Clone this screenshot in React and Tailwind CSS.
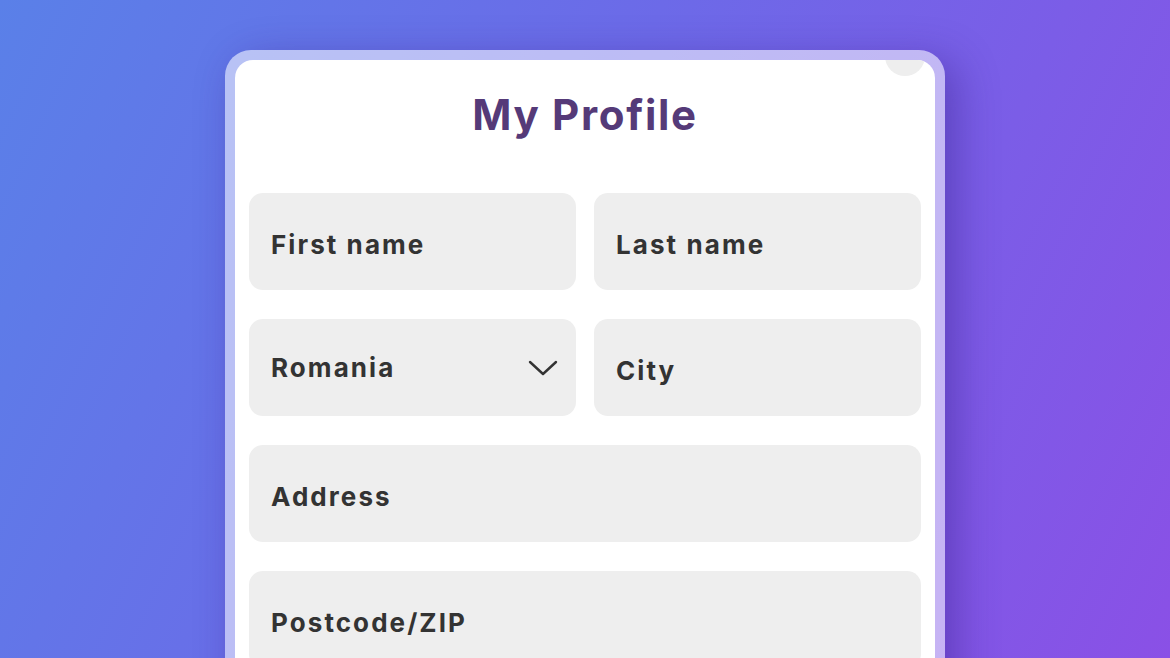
import React from "react";

const font = { fontFamily: "Inter, 'Open Sans', sans-serif" };

function Field({ label, select }) {
  return (
    <div className="h-[97px] rounded-[14px] bg-[#eeeeee] flex items-center justify-between pl-[22px] pr-[18px]">
      <span className={"text-[26px] font-bold text-[#333333] tracking-[0.08em] " + (select ? "" : "translate-y-[3px]")}>{label}</span>
      {select && (
        <svg width="30" height="18" viewBox="0 0 30 18" fill="none">
          <path d="M2 3 L15 15 L28 3" stroke="#333" strokeWidth="2.4" strokeLinecap="round" strokeLinejoin="round" />
        </svg>
      )}
    </div>
  );
}

export default function App() {
  return (
    <div
      className="w-[1170px] h-[658px] overflow-hidden flex justify-center pt-[50px] bg-[linear-gradient(115deg,#5a80e8_0%,#6c6ae8_45%,#8a50e6_100%)]"
      style={font}
    >
      <div className="w-[720px] h-[700px] rounded-[26px] p-[10px] bg-white/55 shadow-[12px_10px_40px_rgba(60,30,140,0.45)]">
        <div className="relative h-full rounded-[18px] bg-white overflow-hidden px-[14px]">
          <div className="absolute right-[10px] top-[-24px] w-[40px] h-[40px] rounded-full bg-[#eeeeee]" />
          <h1 className="text-center text-[42px] font-bold text-[#553a78] pt-[26px] leading-[58px] tracking-[0.04em]">My Profile</h1>
          <div className="mt-[49px] grid grid-cols-2 gap-x-[18px] gap-y-[29px]">
            <Field label="First name" />
            <Field label="Last name" />
            <Field label="Romania" select />
            <Field label="City" />
            <div className="col-span-2"><Field label="Address" /></div>
            <div className="col-span-2"><Field label="Postcode/ZIP" /></div>
          </div>
        </div>
      </div>
    </div>
  );
}
